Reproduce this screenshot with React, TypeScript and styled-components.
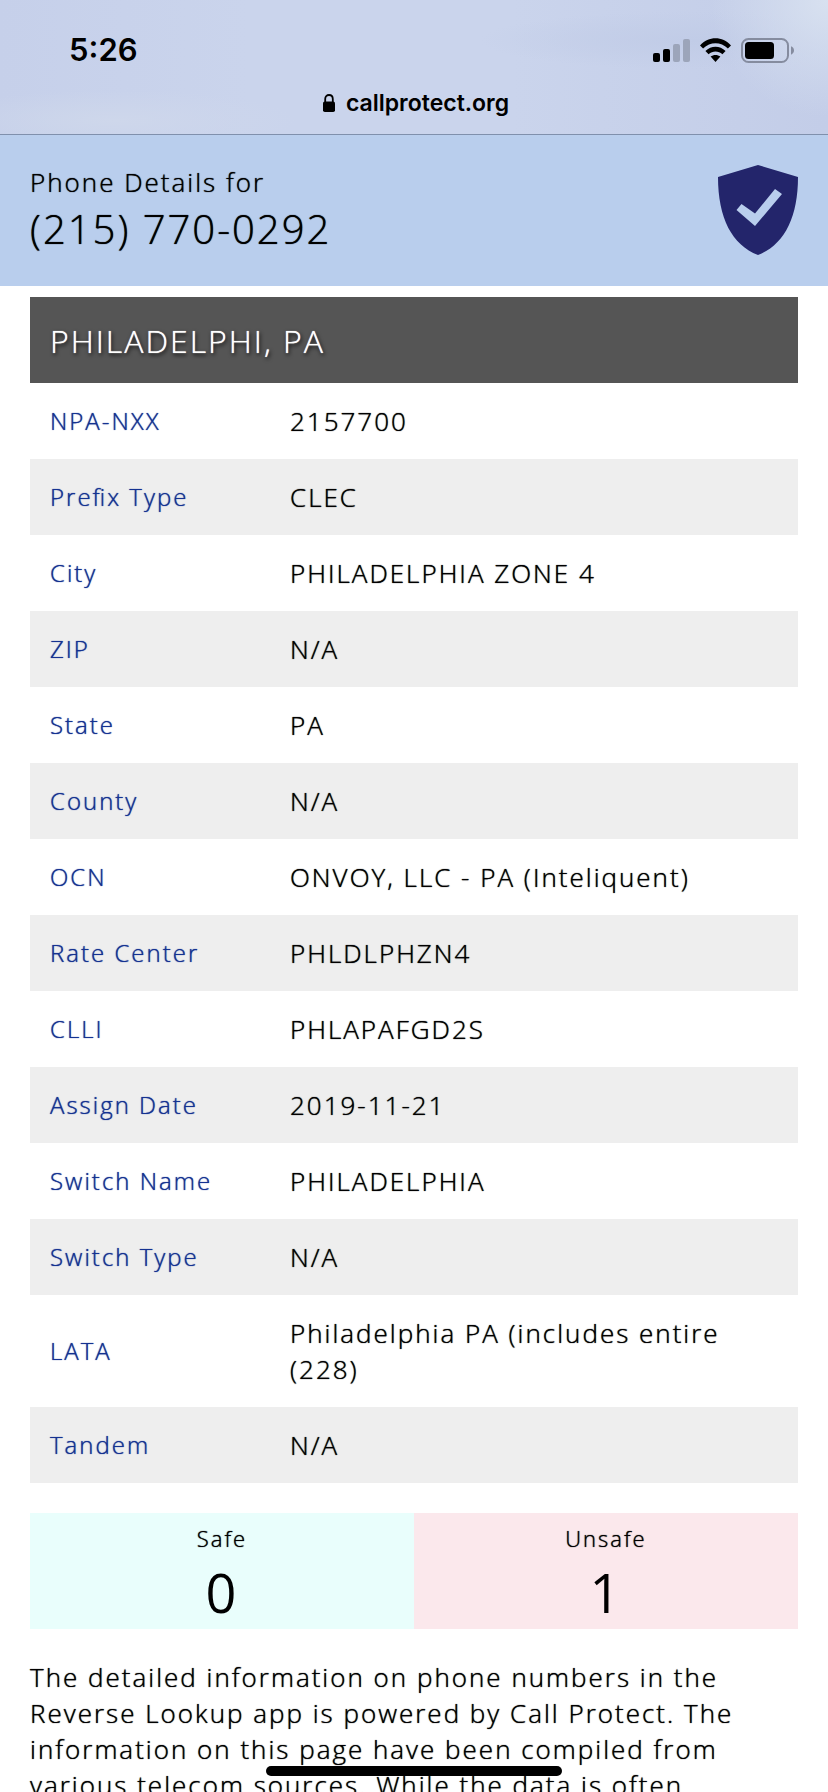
import React from "react";
import styled, { createGlobalStyle } from "styled-components";

const GlobalStyle = createGlobalStyle`
  *, *::before, *::after { box-sizing: border-box; }
  body {
    margin: 0;
    background: #fff;
    color: #000;
    font-family: "Open Sans", "Noto Sans", sans-serif;
    font-feature-settings: "liga" 1;
    font-size: 26px;
    font-weight: 300;
    line-height: 36px;
    letter-spacing: 2px;
  }
`;

const Screen = styled.div`
  height: 100vh;
  overflow: hidden;
  text-shadow: 0 0 1px currentColor;
`;

const BrowserBar = styled.div`
  height: 135px;
  padding-top: 30px;
  border-bottom: 1px solid #8090ac;
  font-family: Inter, "Liberation Sans", sans-serif;
  letter-spacing: normal;
  text-shadow: none;
  background:
    radial-gradient(circle at 100% 0, #d8e1f0 0, rgba(216, 225, 240, 0) 14%),
    radial-gradient(ellipse at 84% 30%, #c1cce7 0, rgba(193, 204, 231, 0) 22%),
    radial-gradient(ellipse at 14% 90%, #ced7eb 0, rgba(206, 215, 235, 0) 18%),
    linear-gradient(90deg, #c6d0ea 0, #cad4ec 30%, #cad4ec 62%, #c3cde8 100%);
`;

const StatusRow = styled.div`
  display: flex;
  justify-content: space-between;
  align-items: center;
  height: 40px;
  padding: 0 34px 0 69px;
`;

const Clock = styled.time`
  font-size: 31px;
  font-weight: 600;
`;

const StatusIcons = styled.div`
  display: flex;
  align-items: center;
  gap: 10px;
`;

const AddressRow = styled.div`
  display: flex;
  justify-content: center;
  align-items: center;
  gap: 11px;
  height: 36px;
  margin-top: 15px;
  padding-left: 4px;
`;

const Address = styled.a`
  color: #000;
  font-size: 23px;
  font-weight: 600;
  text-decoration: none;
`;

const PageHeader = styled.header`
  display: flex;
  justify-content: space-between;
  align-items: flex-start;
  padding: 30px 30px 28px;
  background: #b9ceed;
`;

const Title = styled.h1`
  margin: 0;
  font-size: 26px;
  font-weight: inherit;
  line-height: 34px;
`;

const PhoneNumber = styled.span`
  display: block;
  font-size: 40px;
  line-height: 59px;
`;

const Content = styled.main`
  padding: 11px 30px 0;
`;

const Place = styled.h2`
  margin: 0;
  padding: 26px 20px 24px;
  background: #555;
  color: #fff;
  font-size: 32px;
  font-weight: inherit;
  text-shadow: 0 0 1px #fff, 1px 2px 4px #000;
`;

const DetailTable = styled.table`
  width: 100%;
  border-collapse: collapse;
`;

const DetailRow = styled.tr`
  &:nth-child(even) { background: #eee; }
`;

const Label = styled.th`
  width: 240px;
  padding: 20px;
  color: #143291;
  font-size: 24px;
  font-weight: inherit;
  text-align: left;
`;

const Value = styled.td`
  padding: 20px;
`;

const Ratings = styled.section`
  display: grid;
  grid-template-columns: 1fr 1fr;
  margin-top: 30px;
`;

const Rating = styled.div<{ $tone: string }>`
  padding: 7px 0 1px;
  background: ${({ $tone }) => $tone};
  font-size: 22px;
  text-align: center;
`;

const Count = styled.div`
  font-size: 54px;
  font-weight: 400;
  line-height: 72px;
  text-shadow: none;
`;

const Note = styled.p`
  margin: 30px 0 0;
`;

const HomeIndicator = styled.div`
  position: fixed;
  bottom: 16px;
  left: 50%;
  width: 296px;
  height: 10px;
  margin-left: -148px;
  border-radius: 5px;
  background: #000;
`;

const details: [string, string][] = [
  ["NPA-NXX", "2157700"],
  ["Prefix Type", "CLEC"],
  ["City", "PHILADELPHIA ZONE 4"],
  ["ZIP", "N/A"],
  ["State", "PA"],
  ["County", "N/A"],
  ["OCN", "ONVOY, LLC - PA (Inteliquent)"],
  ["Rate Center", "PHLDLPHZN4"],
  ["CLLI", "PHLAPAFGD2S"],
  ["Assign Date", "2019-11-21"],
  ["Switch Name", "PHILADELPHIA"],
  ["Switch Type", "N/A"],
  ["LATA", "Philadelphia PA (includes entire (228)"],
  ["Tandem", "N/A"],
];

const SignalIcon = () => (
  <svg width="37" height="24" viewBox="0 0 37 24" aria-hidden="true">
    <rect x="0" y="15" width="7" height="9" rx="2" />
    <rect x="10" y="11" width="7" height="13" rx="2" />
    <rect x="20" y="6" width="7" height="18" rx="2" fill="#9ca5ba" />
    <rect x="30" y="1" width="7" height="23" rx="2" fill="#9ca5ba" />
  </svg>
);

const WifiIcon = () => (
  <svg width="31" height="24" viewBox="0 0 31 24" aria-hidden="true">
    <path d="M0 7.4C8.6-2.2 22.4-2.2 31 7.4L27.9 10.6C20.8 3.3 10.2 3.3 3.1 10.6Z" />
    <path d="M5.4 13C11.2 7.2 19.8 7.2 25.6 13L22.4 16.2C18.4 12.5 12.6 12.5 8.6 16.2Z" />
    <path d="M10.6 18.6C13.4 16.4 17.6 16.4 20.4 18.6L15.5 24Z" />
  </svg>
);

const BatteryIcon = () => (
  <svg width="53" height="25" viewBox="0 0 53 25" aria-hidden="true">
    <rect x="1" y="1" width="46" height="23" rx="6.5" fill="none" stroke="#858c9f" strokeWidth="2" />
    <rect x="4" y="4" width="29" height="17" rx="3.5" />
    <path d="M50 8.3C52.2 9.3 53 10.8 53 12.5S52.2 15.7 50 16.7Z" fill="#858c9f" />
  </svg>
);

const LockIcon = () => (
  <svg width="12" height="18" viewBox="0 0 12 18" aria-hidden="true">
    <path d="M2.2 8V5C2.2 2.5 3.8 1 6 1S9.8 2.5 9.8 5V8" fill="none" stroke="#000" strokeWidth="1.8" />
    <rect x="0" y="7.5" width="12" height="10.5" rx="1.8" />
  </svg>
);

const ShieldIcon = () => (
  <svg width="80" height="90" viewBox="0 0 80 90" role="img" aria-label="Protected">
    <path
      fill="#23256b"
      fillRule="evenodd"
      d="M40 0L80 12C80 53 66 80 40 90C14 80 0 53 0 12ZM18.5 45L37 61L64 29L57 24L37 48.5L23.5 39Z"
    />
  </svg>
);

export default function App() {
  return (
    <Screen>
      <GlobalStyle />
      <BrowserBar>
        <StatusRow>
          <Clock>5:26</Clock>
          <StatusIcons>
            <SignalIcon />
            <WifiIcon />
            <BatteryIcon />
          </StatusIcons>
        </StatusRow>
        <AddressRow>
          <LockIcon />
          <Address href="#">callprotect.org</Address>
        </AddressRow>
      </BrowserBar>
      <PageHeader>
        <Title>
          Phone Details for
          <PhoneNumber>(215) 770-0292</PhoneNumber>
        </Title>
        <ShieldIcon />
      </PageHeader>
      <Content>
        <Place>PHILADELPHI, PA</Place>
        <DetailTable>
          <tbody>
            {details.map(([label, value]) => (
              <DetailRow key={label}>
                <Label scope="row">{label}</Label>
                <Value>{value}</Value>
              </DetailRow>
            ))}
          </tbody>
        </DetailTable>
        <Ratings>
          <Rating $tone="#e9fefc">
            Safe
            <Count>0</Count>
          </Rating>
          <Rating $tone="#fbe8ec">
            Unsafe
            <Count>1</Count>
          </Rating>
        </Ratings>
        <Note>
          The detailed information on phone numbers in the Reverse Lookup app is
          powered by Call Protect. The information on this page have been
          compiled from various telecom sources. While the data is often
        </Note>
      </Content>
      <HomeIndicator />
    </Screen>
  );
}
